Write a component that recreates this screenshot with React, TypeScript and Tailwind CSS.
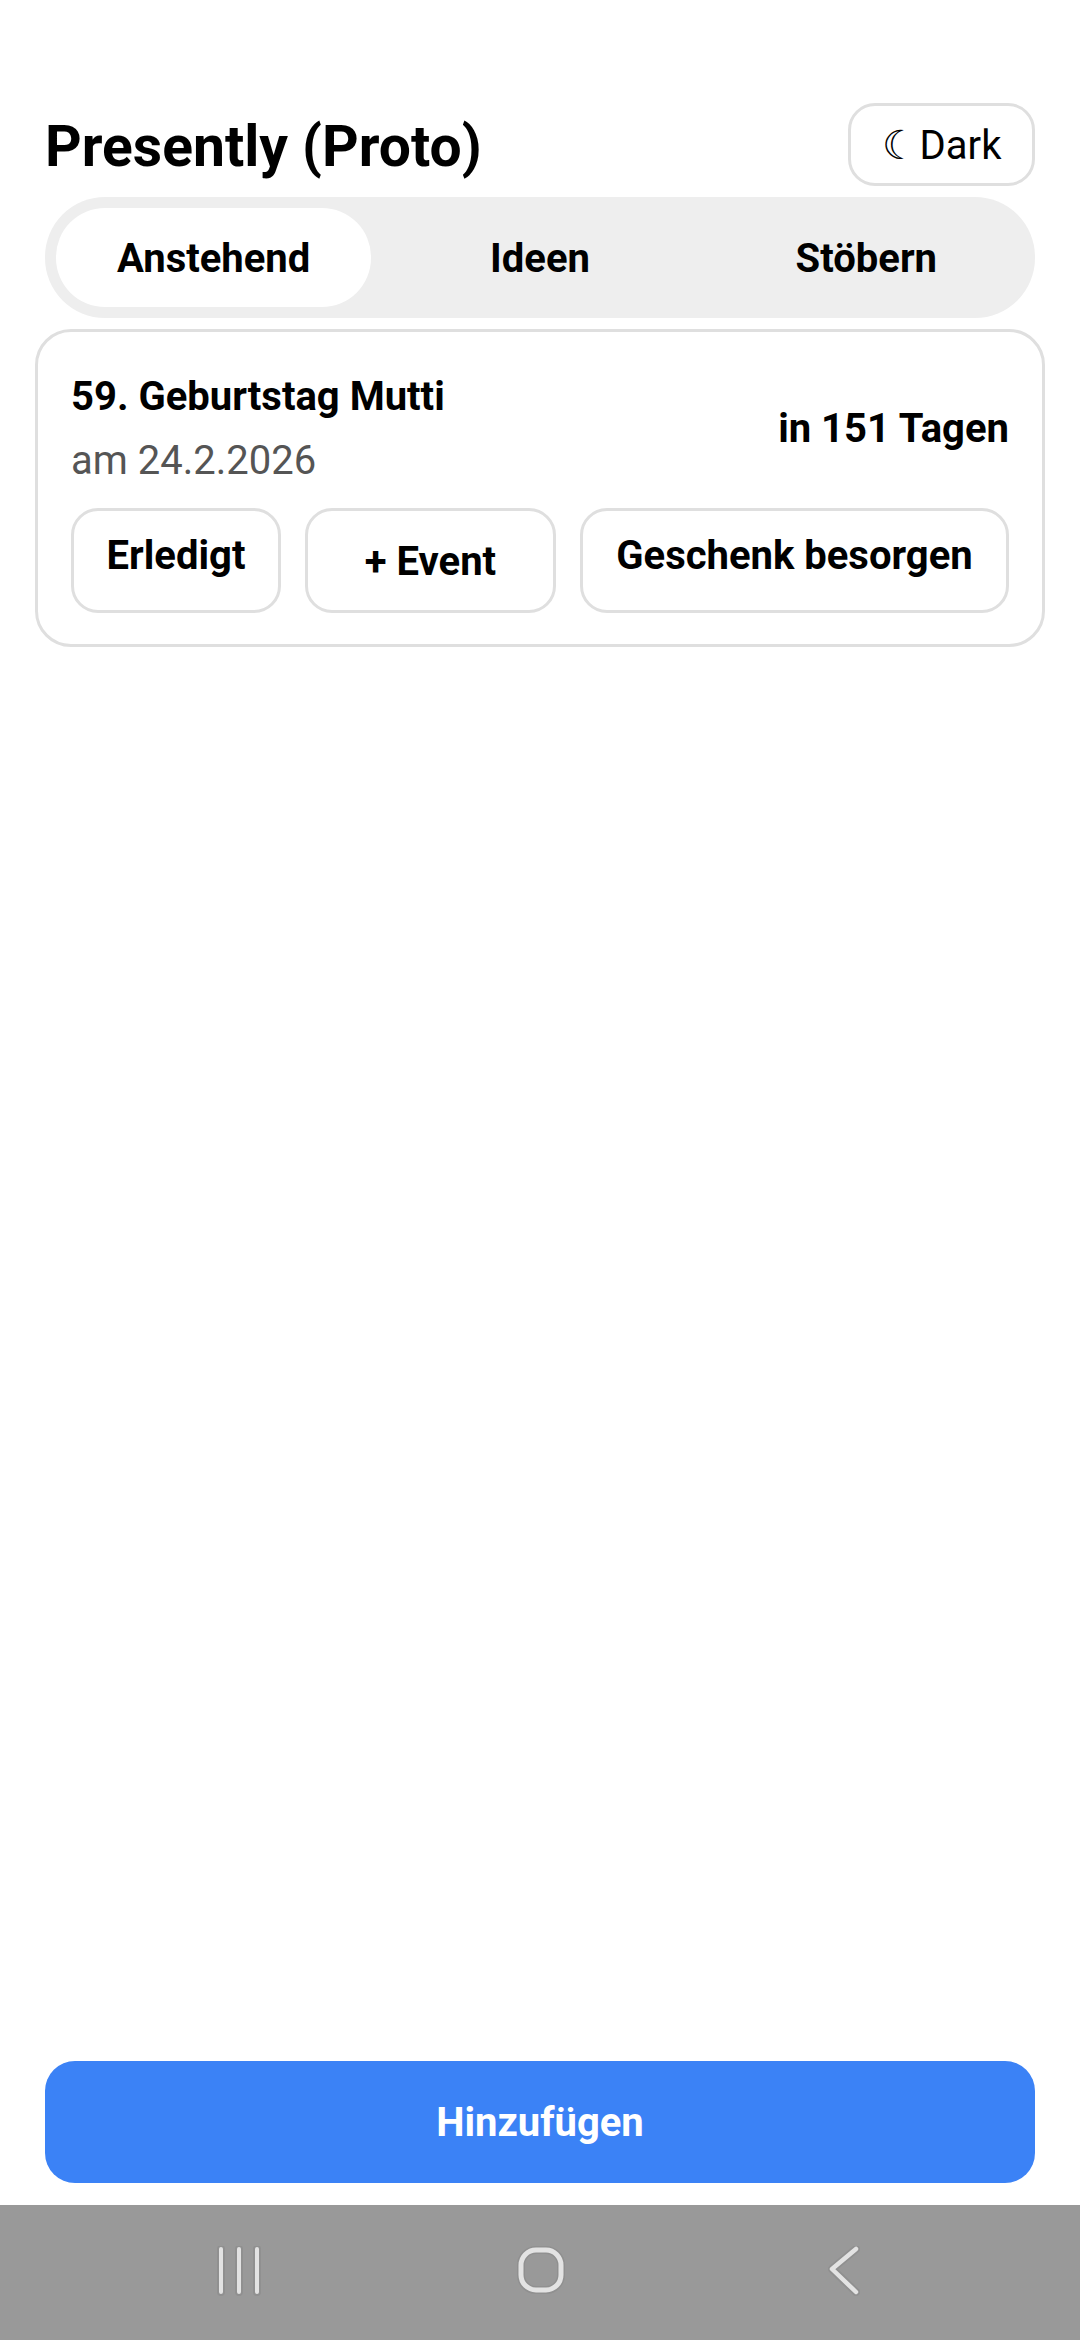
import React from 'react';

const font = { fontFamily: 'Roboto, "Noto Sans", sans-serif' };

const tabs = ['Anstehend', 'Ideen', 'Stöbern'];

const ActionButton: React.FC<{ label: string; className: string; textClass?: string }> = ({
  label,
  className,
  textClass = '',
}) => (
  <button
    type="button"
    className={`h-[105px] rounded-[27px] border-[3px] border-[#dfdfdf] bg-white text-[40px] leading-[46px] font-bold text-black ${className}`}
  >
    <span className={`block ${textClass}`}>{label}</span>
  </button>
);

export default function App() {
  return (
    <div
      className="flex h-[2340px] w-[1080px] flex-col overflow-hidden bg-white text-black"
      style={font}
    >
      <div className="flex flex-1 flex-col">
        <header className="flex items-start justify-between pt-[103px] pr-[45px] pl-[45px]">
          <h1 className="pt-[11px] text-[57px] leading-[66px] font-bold">Presently (Proto)</h1>
          <button
            type="button"
            className="flex h-[83px] w-[187px] items-center justify-center gap-[2px] rounded-[27px] border-[3px] border-[#dfdfdf] bg-white pt-[3px] text-[40px] leading-[46px]"
          >
            <span>☾</span>
            <span>Dark</span>
          </button>
        </header>

        <nav className="mx-[45px] mt-[11px] flex h-[121px] items-center gap-[11px] rounded-[60px] bg-[#eeeeee] p-[11px]">
          {tabs.map((tab, i) => (
            <div
              key={tab}
              className={`flex h-[99px] flex-1 items-center justify-center rounded-[49px] pt-[3px] text-[40px] font-bold ${
                i === 0 ? 'bg-white' : ''
              }`}
            >
              {tab}
            </div>
          ))}
        </nav>

        <section className="mx-[35px] mt-[11px] h-[318px] rounded-[36px] border-[3px] border-[#dfdfdf] px-[33px] pt-[42px]">
          <div className="flex items-center justify-between">
            <div>
              <div className="text-[40px] leading-[46px] font-bold">59. Geburtstag Mutti</div>
              <div className="mt-[18px] text-[40px] leading-[46px] text-[#555555]">am 24.2.2026</div>
            </div>
            <div className="text-[40px] leading-[46px] font-bold">in 151 Tagen</div>
          </div>
          <div className="mt-[24px] flex gap-[24px]">
            <ActionButton label="Erledigt" className="w-[211px]" textClass="-translate-y-[5px]" />
            <ActionButton label="+ Event" className="w-[252px]" textClass="translate-y-[1px]" />
            <ActionButton label="Geschenk besorgen" className="w-[431px]" textClass="-translate-y-[5px]" />
          </div>
        </section>
      </div>

      <div className="px-[45px] pb-[22px]">
        <button
          type="button"
          className="h-[122px] w-full rounded-[30px] bg-[#3b82f6] pt-[2px] text-[40px] font-bold text-white"
        >
          Hinzufügen
        </button>
      </div>

      <div className="flex h-[135px] items-start bg-[#999999] pt-[41px] pl-[214px]">
        <svg width="48" height="50" viewBox="0 0 48 50" fill="none" strokeLinecap="round">
          <path d="M7 3v43M25 3v43M43 3v43" stroke="#909090" strokeWidth="8" />
          <path d="M7 3v43M25 3v43M43 3v43" stroke="#e3e3e3" strokeWidth="4" />
        </svg>
        <svg className="ml-[255px]" width="48" height="50" viewBox="0 0 48 50" fill="none">
          <rect x="4" y="4" width="40" height="40" rx="15" stroke="#909090" strokeWidth="8" />
          <rect x="4" y="4" width="40" height="40" rx="15" stroke="#e3e3e3" strokeWidth="5" />
        </svg>
        <svg className="ml-[263px]" width="32" height="50" viewBox="0 0 32 50" fill="none" strokeLinecap="round" strokeLinejoin="round">
          <path d="M28 3 4 23l24 23" stroke="#909090" strokeWidth="8" />
          <path d="M28 3 4 23l24 23" stroke="#e3e3e3" strokeWidth="4.5" />
        </svg>
      </div>
    </div>
  );
}
